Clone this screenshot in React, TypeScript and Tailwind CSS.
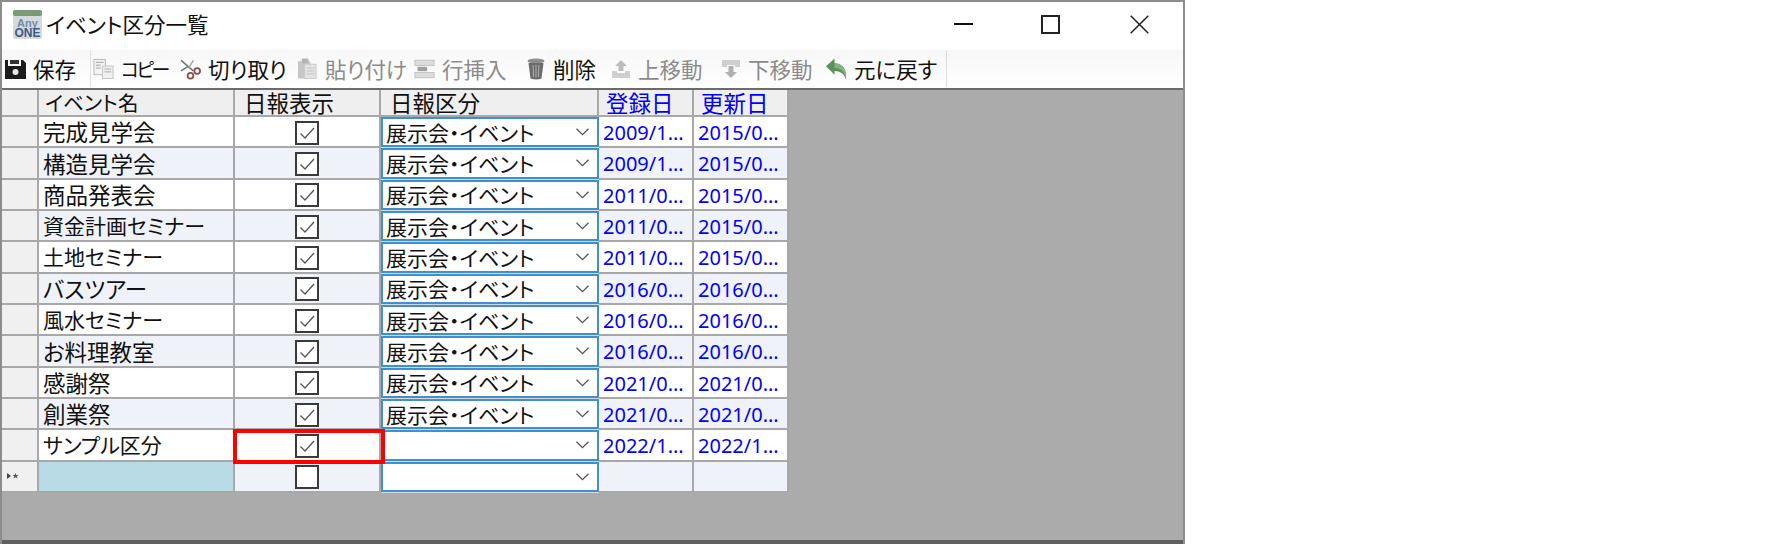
import type { ReactNode } from 'react'

const jp = "font-['Noto_Sans_CJK_JP','Noto_Sans',sans-serif] [font-feature-settings:'palt']"

const kanji = 'text-[22.5px]'
const kana = 'text-[21px]'

const rows = [
  ['完成見学会', true, '展示会・イベント', '2009/1...', '2015/0...', kanji],
  ['構造見学会', true, '展示会・イベント', '2009/1...', '2015/0...', kanji],
  ['商品発表会', true, '展示会・イベント', '2011/0...', '2015/0...', kanji],
  ['資金計画セミナー', true, '展示会・イベント', '2011/0...', '2015/0...', kana],
  ['土地セミナー', true, '展示会・イベント', '2011/0...', '2015/0...', kana],
  ['バスツアー', true, '展示会・イベント', '2016/0...', '2016/0...', kanji],
  ['風水セミナー', true, '展示会・イベント', '2016/0...', '2016/0...', kana],
  ['お料理教室', true, '展示会・イベント', '2016/0...', '2016/0...', kanji],
  ['感謝祭', true, '展示会・イベント', '2021/0...', '2021/0...', kanji],
  ['創業祭', true, '展示会・イベント', '2021/0...', '2021/0...', kanji],
  ['サンプル区分', true, '', '2022/1...', '2022/1...', kana],
  ['', false, '', '', '', kana],
] as const

function Logo() {
  return (
    <svg viewBox="0 0 29 29" className="h-[29px] w-[29px] shrink-0" aria-hidden>
      <rect width="29" height="29" rx="2" fill="#d5dade" />
      <rect width="29" height="6" rx="2" fill="#7c9a76" />
      <text x="14.5" y="17" textAnchor="middle" fontSize="11" fontFamily="Liberation Sans" fontWeight="700" fill="#7489a3">Any</text>
      <text x="14.5" y="27" textAnchor="middle" fontSize="12" fontWeight="700" fontFamily="Liberation Sans" fill="#3a5a85">ONE</text>
    </svg>
  )
}

function SaveIcon() {
  return (
    <svg viewBox="0 0 21 21" className="h-[21px] w-[21px]" aria-hidden>
      <path d="M0 1h3v6h13V1h2l3 3v16H0z" fill="#1c1c1c" />
      <rect x="5" y="1" width="9" height="4" fill="#333" />
      <circle cx="10.5" cy="13" r="3" fill="#e8e8e8" />
    </svg>
  )
}

function CopyIcon() {
  return (
    <svg viewBox="0 0 22 22" className="h-[22px] w-[22px]" aria-hidden>
      <rect x="1" y="1" width="12" height="16" fill="#f4f4f4" stroke="#b5b5b5" />
      <path d="M3 4h8M3 7h5M3 10h5" stroke="#9a9a9a" />
      <rect x="10" y="8" width="11" height="13" fill="#f0f0f0" stroke="#c4c4c4" />
      <path d="M12 11h7M12 14h7" stroke="#a8a8a8" />
    </svg>
  )
}

function ScissorsIcon() {
  return (
    <svg viewBox="0 0 22 22" className="h-[22px] w-[22px]" fill="none" aria-hidden>
      <path d="M1 2l13 11M1 13l8-5" stroke="#6f7276" strokeWidth="1.6" />
      <path d="M9 10l5-8" stroke="#9aa0a4" strokeWidth="1.4" />
      <circle cx="18" cy="13" r="3" stroke="#8c4b4b" strokeWidth="1.8" />
      <circle cx="11" cy="18" r="3" stroke="#8c4b4b" strokeWidth="1.8" />
    </svg>
  )
}

function PasteIcon() {
  return (
    <svg viewBox="0 0 22 22" className="h-[22px] w-[22px]" aria-hidden>
      <rect x="1" y="3" width="13" height="18" rx="1" fill="#c6c6c6" />
      <rect x="5" y="0" width="7" height="5" rx="1" fill="#b4b4b4" />
      <rect x="8" y="6" width="12" height="15" fill="#e4e4e4" stroke="#c9c9c9" />
      <path d="M10 10h8M10 13h8M10 16h8" stroke="#c2c2c2" />
    </svg>
  )
}

function InsertIcon() {
  return (
    <svg viewBox="0 0 24 22" className="h-[22px] w-[24px]" aria-hidden>
      <rect x="1" y="1" width="22" height="6" fill="#dcdcdc" stroke="#c0c0c0" />
      <rect x="1" y="15" width="22" height="6" fill="#dcdcdc" stroke="#c0c0c0" />
      <rect x="4" y="8.5" width="11" height="5" fill="#9f9f9f" />
    </svg>
  )
}

function TrashIcon() {
  return (
    <svg viewBox="0 0 18 22" className="h-[22px] w-[18px]" aria-hidden>
      <ellipse cx="9" cy="3" rx="8.5" ry="2.5" fill="#8d8d8d" />
      <path d="M1.5 5h15l-2 15.5q-5 2-11 0z" fill="#6c6c6c" />
      <path d="M6 7l.7 12M9 7v12.5M12 7l-.7 12" stroke="#b0b0b0" />
    </svg>
  )
}

function UpIcon() {
  return (
    <svg viewBox="0 0 20 20" className="h-[20px] w-[20px]" aria-hidden>
      <path d="M10 1l6 6h-3.500v5h-5V7H4z" fill="#bdbdbd" />
      <path d="M1 12h5v2h8v-2h5v7H1z" fill="#cfcfcf" />
    </svg>
  )
}

function DownIcon() {
  return (
    <svg viewBox="0 0 20 20" className="h-[20px] w-[20px]" aria-hidden>
      <path d="M1 1h18v7h-5V6H6v2H1z" fill="#cfcfcf" />
      <path d="M7.500 7h5v6H16l-6 6-6-6h3.500z" fill="#b0b0b0" />
    </svg>
  )
}

function UndoIcon() {
  return (
    <svg viewBox="0 0 22 22" className="h-[22px] w-[22px]" aria-hidden>
      <path d="M0 8l9-8v5c7 0 13 5 12 17-2-6-6-9-12-9v4z" fill="#5f8f5c" />
      <path d="M9 5c7 0 13 5 12 17-1-8-6-12-12-12z" fill="#86b183" />
    </svg>
  )
}

function NewRowMark() {
  return (
    <svg viewBox="0 0 12 8" className="h-[8px] w-[12px]" aria-hidden>
      <path d="M0 1l4 3-4 3z" fill="#444" />
      <path d="M8.500 1l.8 2h2.200L9.800 4.300l.7 2.200-2-1.300-2 1.300.7-2.200L5.500 3h2.200z" fill="#555" />
    </svg>
  )
}

function Tool({ icon, label, off, className, labelClass }: { icon: ReactNode; label: string; off?: boolean; className: string; labelClass?: string }) {
  return (
    <div className={`flex items-center ${className}`}>
      <div className="flex w-[21px] shrink-0 justify-center">{icon}</div>
      <span className={`ml-[7px] whitespace-nowrap ${labelClass ?? 'text-[21.5px]'} ${off ? 'text-[#8b8b8b]' : 'text-[#111]'}`}>{label}</span>
    </div>
  )
}

function Check({ on }: { on: boolean }) {
  return (
    <div className="flex h-[24px] w-[24px] items-center justify-center border-2 border-[#3a3a3a] bg-white">
      {on && (
        <svg viewBox="0 0 20 20" className="h-[20px] w-[20px]" fill="none" aria-hidden>
          <path d="M3.500 10.500l4.500 4.500 9-10" stroke="#555" strokeWidth="1.300" />
        </svg>
      )}
    </div>
  )
}

function Chevron() {
  return (
    <svg viewBox="0 0 13 8" className="h-[8px] w-[13px] shrink-0" fill="none" aria-hidden>
      <path d="M.5.700l6 6 6-6" stroke="#555" strokeWidth="1.300" />
    </svg>
  )
}

export default function App() {
  return (
    <div className={`h-[544px] w-[1775px] bg-white ${jp}`}>
      <div className="flex h-[544px] w-[1185px] flex-col border-x-2 border-t-2 border-[#8c8c8c]">
        <div className="flex h-[48px] shrink-0 items-center bg-white pb-[4px] pl-[11px]">
          <Logo />
          <span className="ml-[4px] text-[21.5px] text-[#111]">イベント区分一覧</span>
          <div className="ml-auto flex items-center">
            <div className="mr-[68px] h-[2px] w-[19px] bg-[#111]" />
            <div className="mr-[70px] h-[19px] w-[19px] border-2 border-[#222]" />
            <svg viewBox="0 0 19 19" className="mr-[34px] h-[19px] w-[19px]" fill="none" aria-hidden>
              <path d="M.7.700l17.600 17.600M18.300.700L.7 18.300" stroke="#222" strokeWidth="1.500" />
            </svg>
          </div>
        </div>

        <div className="flex h-[40px] shrink-0 items-center border-b-2 border-[#6b6b6b] bg-gradient-to-b from-[#f7f7f7] to-white pl-[3px]">
          <Tool icon={<SaveIcon />} label="保存" className="w-[85px]" />
          <div className="h-[36px] w-px bg-[#e0e0e0]" />
          <Tool icon={<CopyIcon />} label="コピー" labelClass="text-[19px] tracking-[-2.5px]" className="ml-[2px] w-[87px]" />
          <Tool icon={<ScissorsIcon />} label="切り取り" className="w-[117px]" />
          <Tool icon={<PasteIcon />} label="貼り付け" off className="w-[117px]" />
          <Tool icon={<InsertIcon />} label="行挿入" off className="w-[111px]" />
          <Tool icon={<TrashIcon />} label="削除" className="w-[85px]" />
          <Tool icon={<UpIcon />} label="上移動" off className="w-[110px]" />
          <Tool icon={<DownIcon />} label="下移動" off className="w-[106px]" />
          <Tool icon={<UndoIcon />} label="元に戻す" className="w-[120px]" />
          <div className="h-[36px] w-px bg-[#dcdcdc]" />
        </div>

        <div className="relative min-h-0 flex-1 border-b-[4px] border-[#5f5f5f] bg-[#ababab]">
          <div className="grid w-[787px] grid-cols-[37px_196px_146px_218px_95px_95px] grid-rows-[27px_repeat(12,31.33px)] leading-none text-[#111]">
            <div className="border-r-2 border-b-2 border-[#a8a8a8] bg-[#efefef]" />
            <div className="flex items-center border-r-2 border-b-2 border-[#a8a8a8] bg-[#efefef] pl-[6px] text-[20.5px]">イベント名</div>
            <div className="flex items-center border-r-2 border-b-2 border-[#a8a8a8] bg-[#efefef] pl-[9px] text-[22.5px]">日報表示</div>
            <div className="flex items-center border-r-2 border-b-2 border-[#a8a8a8] bg-[#efefef] pl-[9px] text-[22.5px]">日報区分</div>
            <div className="flex items-center border-r-2 border-b-2 border-[#a8a8a8] bg-[#efefef] pl-[7px] text-[22.5px] text-[#0000ff]">登録日</div>
            <div className="flex items-center border-r-2 border-b-2 border-[#a8a8a8] bg-[#efefef] pl-[7px] text-[22.5px] text-[#0000ff]">更新日</div>

            {rows.map((row, i) => {
              const alt = i % 2 === 1
              const isNew = i === rows.length - 1
              const bg = alt ? 'bg-[#eff3f9]' : 'bg-white'
              return (
                <div key={i} className="contents">
                  <div className="flex items-center border-r-2 border-b-2 border-[#a8a8a8] bg-[#f0f0f0] pl-[5px]">
                    {isNew && <NewRowMark />}
                  </div>
                  <div className={`flex items-center border-r-2 border-b-2 border-[#a8a8a8] pl-[4px] ${row[5]} ${isNew ? 'bg-[#b9dbe6]' : bg}`}>{row[0]}</div>
                  <div className={`flex items-center justify-center border-r-2 border-b-2 border-[#a8a8a8] pt-[2px] ${bg}`}>
                    <Check on={row[1]} />
                  </div>
                  <div className="bg-[#d8d8d8] pb-px">
                    <div className="flex h-full items-center justify-between border-2 border-[#4090d0] bg-white pr-[8px] pl-[3px] text-[21px]">
                      <span>{row[2]}</span>
                      <Chevron />
                    </div>
                  </div>
                  <div className={`flex items-center border-r-2 border-b-2 border-[#a8a8a8] pt-[3px] pl-[4px] font-['Noto_Sans',sans-serif] text-[20px] text-[#0000ff] ${bg}`}>{row[3]}</div>
                  <div className={`flex items-center border-r-2 border-b-2 border-[#a8a8a8] pt-[3px] pl-[4px] font-['Noto_Sans',sans-serif] text-[20px] text-[#0000ff] ${bg}`}>{row[4]}</div>
                </div>
              )
            })}
          </div>
          <div className="absolute top-[339px] left-[231px] h-[35px] w-[152px] border-[4px] border-[#ff0000]" />
        </div>
      </div>
    </div>
  )
}
